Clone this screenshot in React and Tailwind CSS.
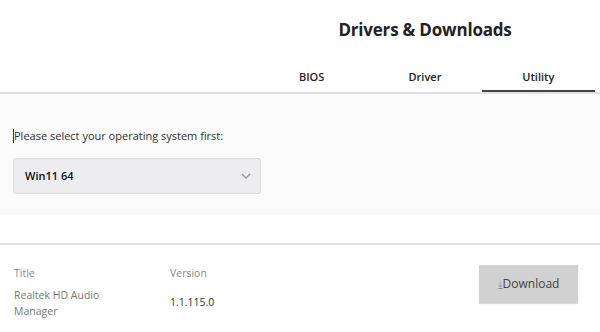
import React from 'react';

const tabs = ['BIOS', 'Driver', 'Utility'];

const App = () => {
  return (
    <div className="w-[600px] h-[332px] overflow-hidden bg-white font-['Open_Sans',sans-serif] text-[#333]">
      {/* Header + tabs */}
      <div className="flex flex-col items-end pr-[5px]">
        <div className="w-[340px] flex flex-col items-center">
          <h1 className="pt-[17px] h-[62px] text-[17px] font-bold text-[#222] tracking-[-0.2px]">Drivers &amp; Downloads</h1>
          <div className="flex w-full">
            {tabs.map((t) => (
              <div
                key={t}
                className={`flex-1 h-[30px] flex items-start justify-center pt-[7px] text-[11px] font-semibold text-[#222] border-b-2 ${t === 'Utility' ? 'border-[#444]' : 'border-transparent'}`}
              >
                {t}
              </div>
            ))}
          </div>
        </div>
      </div>
      <div className="h-[2px] bg-[#e0e0e0]" />

      {/* OS select */}
      <div className="bg-[#fafafa] h-[121px] pt-[32px] pl-[13px]">
        <div className="flex items-center text-[11px] text-[#333] h-[20px]">
          <span className="w-px h-[14px] bg-[#333]" />
          <span>Please select your operating system first:</span>
        </div>
        <div className="mt-[12px] w-[248px] h-[36px] rounded-[3px] border border-[#dcdcdc] bg-[#ededef] flex items-center justify-between pl-[11px] pr-[8px]">
          <span className="text-[11px] font-semibold text-[#111]">Win11 64</span>
          <svg width="12" height="8" viewBox="0 0 12 8" fill="none" stroke="#999" strokeWidth="1.3">
            <path d="M2 2l4 4 4-4" />
          </svg>
        </div>
      </div>

      <div className="h-[28px]" />
      <div className="h-[2px] bg-[#e0e0e0]" />

      {/* Table */}
      <div className="flex pl-[14px] pt-[21px]">
        <div className="w-[156px] text-[10.5px] text-[#888]">
          <div className="h-[21px]">Title</div>
          <div className="leading-[16px] text-[#777]">Realtek HD Audio<br />Manager</div>
        </div>
        <div className="w-[309px] text-[10.5px]">
          <div className="h-[21px] text-[#888]">Version</div>
          <div className="h-[32px] flex items-center text-[#333] font-medium">1.1.115.0</div>
        </div>
        <div className="-mt-[1px]">
          <button className="w-[99px] h-[38px] bg-[#d1d1d1] shadow-[0_1px_1px_rgba(0,0,0,0.15)] text-[12px] text-[#444] flex items-center justify-center">
            <span className="text-[10px] text-[#888] mr-[1px]">⤓</span>Download
          </button>
        </div>
      </div>
    </div>
  );
};

export default App;
